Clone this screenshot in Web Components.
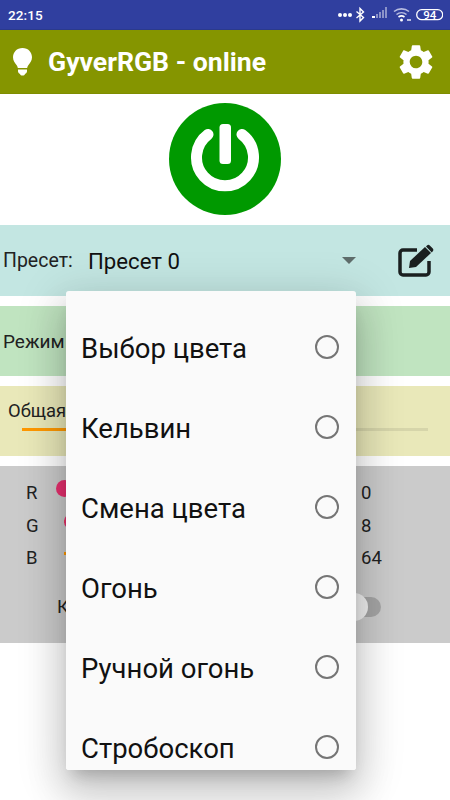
<!DOCTYPE html>
<html lang="ru"><head><meta charset="utf-8"><title>GyverRGB</title>
<style>
html,body{margin:0;padding:0;background:#fff;}
body{width:450px;height:800px;overflow:hidden;font-family:Roboto,"Noto Sans",sans-serif;color:#111;position:relative;}
</style></head><body>
<gyver-app></gyver-app>
<script>
function def(name, html){
  customElements.define(name, class extends HTMLElement{
    constructor(){super();this.attachShadow({mode:'open'}).innerHTML=html;}
  });
}
def('status-bar',`<style>
:host{display:flex;align-items:center;height:29px;padding:0 7px 0 8px;background:#303f9f;color:#fff;font:500 13.5px Roboto,sans-serif;border-bottom:1px solid #2b3a8c}
.t{flex:1;letter-spacing:.1px}
svg{display:block}
</style><span class="t">22:15</span>
<svg width="106" height="20" viewBox="0 0 106 20">
<g fill="#fff"><circle cx="3" cy="10" r="2"/><circle cx="8" cy="10" r="2"/><circle cx="13" cy="10" r="2"/></g>
<path d="M19.5 6.5l7 6-3.5 3.500V3.500l3.500 3.500-7 6" fill="none" stroke="#fff" stroke-width="1.400"/>
<g fill="#8b93c9"><rect x="39" y="9" width="2" height="4"/><rect x="42" y="7" width="2" height="6"/><rect x="45" y="5" width="2" height="8"/><rect x="48" y="2" width="2" height="11"/></g>
<rect x="35" y="11" width="3" height="2" fill="#fff"/>
<path d="M57 6.500a12 12 0 0 1 15 0M59.500 9.500a8 8 0 0 1 10 0" fill="none" stroke="#b7bce0" stroke-width="1.600"/>
<path d="M61.500 12a5 5 0 0 1 6 0" fill="none" stroke="#fff" stroke-width="1.600"/><circle cx="64.500" cy="15" r="1.500" fill="#fff"/>
<rect x="70" y="14" width="4" height="2" fill="#b7bce0"/>
<rect x="79.700" y="4.700" width="26" height="10" rx="5" fill="none" stroke="#fff" stroke-width="1.300"/>
<text x="92.700" y="14" text-anchor="middle" fill="#fff" font-family="Roboto,sans-serif" font-size="11.500" font-weight="500">94</text>
</svg>`);
def('app-bar',`<style>
:host{display:flex;align-items:center;height:64px;padding:0 13px 0 12px;background:#859500;color:#fff;box-sizing:border-box;border-bottom:1px solid #7e8d00}
h1{flex:1;margin:0 0 0 15px;font:700 26.600px Roboto,sans-serif;white-space:nowrap}
svg{display:block;fill:#fff}
</style>
<svg width="21" height="28" viewBox="0 0 21 28"><path d="M10.500 0C4.700 0 1 4.300 1 9.300c0 3.700 2.100 5.700 3.500 7.700.8 1.100 1.100 2.200 1.300 3h9.400c.2-.8.5-1.900 1.300-3 1.400-2 3.500-4 3.500-7.700C20 4.300 16.300 0 10.500 0z"/><path d="M6 21.500h9v2a3 3 0 0 1-2 2.500c-.3 1-1.200 1.500-2.500 1.500S8.300 27 8 26a3 3 0 0 1-2-2.500z"/></svg>
<h1><slot></slot></h1>
<svg width="42" height="42" viewBox="0 0 24 24"><path d="M19.140 12.940c.04-.3.060-.61.060-.94 0-.32-.02-.64-.07-.94l2.030-1.580a.49.49 0 0 0 .12-.61l-1.920-3.320a.488.488 0 0 0-.59-.22l-2.390.96c-.5-.38-1.030-.7-1.620-.94l-.36-2.540a.484.484 0 0 0-.48-.41h-3.840c-.24 0-.43.170-.47.410l-.36 2.540c-.59.240-1.130.570-1.620.940l-2.390-.96c-.22-.08-.47 0-.59.220L2.740 8.870c-.12.210-.08.470.12.610l2.030 1.580c-.05.300-.09.630-.09.940s.02.640.07.940l-2.030 1.580a.49.49 0 0 0-.12.610l1.920 3.320c.12.220.37.290.59.220l2.390-.96c.5.380 1.030.7 1.620.94l.36 2.540c.05.240.24.410.48.410h3.840c.24 0 .44-.17.470-.41l.36-2.540c.59-.24 1.130-.56 1.620-.94l2.390.96c.22.080.47 0 .59-.22l1.920-3.320c.12-.22.070-.47-.12-.61l-2.010-1.580zM12 15.600A3.610 3.610 0 0 1 8.400 12c0-1.980 1.620-3.600 3.600-3.600s3.600 1.620 3.600 3.600-1.620 3.600-3.600 3.600z"/></svg>`);
def('power-button',`<style>
:host{display:flex;justify-content:center;padding:9px 0 10px}
svg{display:block}
</style><svg width="112" height="112" viewBox="0 0 112 112">
<circle cx="56" cy="56" r="56" fill="#009900"/>
<path d="M39 31.500A28.500 28.500 0 1 0 73 31.500" fill="none" stroke="#fff" stroke-width="11" stroke-linecap="round"/>
<rect x="50.500" y="21" width="11.500" height="40" rx="3.500" fill="#fff"/></svg>`);
def('tint-band',`<style>
:host{display:flex;align-items:center;height:70px;margin-bottom:10px;box-sizing:border-box;font:19px Roboto,sans-serif;color:#222;background:var(--bg)}
:host([tall]){height:71px}
</style><slot></slot>`);
def('preset-row',`<style>
:host{display:flex;align-items:center;flex:1;padding:0 15px 0 3px}
.l{font-size:19.500px;width:85px;white-space:nowrap}
.v{flex:1;font-size:22.200px;color:#111;white-space:nowrap}
.a{width:0;height:0;border:7.500px solid transparent;border-top:7px solid #5f6d6b;border-bottom:0;margin-right:42px}
svg{display:block}
</style><span class="l"><slot name="label"></slot></span><span class="v"><slot></slot></span><span class="a"></span>
<svg width="37" height="34" viewBox="0 0 37 34"><path d="M19 6H5a3 3 0 0 0-3 3v19a3 3 0 0 0 3 3h23a3 3 0 0 0 3-3V17" fill="none" stroke="#1a1f1f" stroke-width="3.500"/><path d="M11 24l1-7L27 3l6 6-15 14z" fill="#1a1f1f"/><path d="M29 1.500a2 2 0 0 1 2.800 0l3 3a2 2 0 0 1 0 2.800L33.800 8.500 28 2.500z" fill="#1a1f1f"/></svg>`);
def('slider-line',`<style>
:host{display:block;position:relative;height:3px;background:var(--track,transparent)}
i{display:block;height:100%;width:var(--fill,0);background:#ff9800}
</style><i></i>`);
def('mode-band',`<style>
:host{display:block;flex:1;padding:0 3px;font-size:19px}
</style><slot></slot>`);
def('bright-band',`<style>
:host{display:flex;flex-direction:column;flex:1;padding:14px 22px 0 8px;font-size:18.400px;gap:7px}
slider-line{margin-left:14px;--track:#d6d5aa;--fill:44px}
</style><slot></slot><slider-line></slider-line>`);
def('rgb-row',`<style>
:host{display:grid;grid-template-columns:30px 1fr 90px;align-items:center;height:32.500px;font:18.500px Roboto,sans-serif;color:#222}
.s{position:relative;height:3px;margin-bottom:5px}
.s i{position:absolute;left:8px;top:0;height:3px;width:60px;background:#ff9800}
.s b{position:absolute;left:var(--pos,0);top:-7px;width:17px;height:17px;border-radius:50%;background:#e8306f;display:var(--thumb,block)}
.v{padding-left:1px;margin-top:4px}
.n{margin-top:4px}
</style><span class="n"><slot name="n"></slot></span><span class="s"><i></i><b></b></span><span class="v"><slot></slot></span>`);
def('rgb-panel',`<style>
:host{display:block;height:177px;box-sizing:border-box;padding:9px 0 0 26px;background:#cbcbcb;font:18.500px Roboto,sans-serif;color:#222}
.sw{display:flex;align-items:center;justify-content:flex-end;height:28px;margin-top:20px;padding-right:69px;position:relative}
.k{position:absolute;left:31px}
.t{width:40px;height:20px;border-radius:10px;background:#a5a5a5;position:relative}
.t b{position:absolute;left:-1px;top:-4px;width:28px;height:28px;border-radius:50%;background:#f1f1f1}
</style><slot></slot><div class="sw"><span class="k"><slot name="k"></slot></span><span class="t"><b></b></span></div>`);
def('menu-item',`<style>
:host{display:flex;align-items:center;justify-content:space-between;height:80px;flex:none;padding:0 17px 0 15px;font:27.500px Roboto,sans-serif;color:#111}
span{padding-top:2px}
i{display:block;width:20px;height:20px;border:2px solid #757575;border-radius:50%}
</style><span><slot></slot></span><i></i>`);
def('mode-menu',`<style>
:host{position:absolute;left:66px;top:291px;width:290px;height:479px;box-sizing:border-box;padding-top:16px;background:#fafafa;border-radius:3px;overflow:hidden;display:flex;flex-direction:column}
</style><slot></slot>`);
def('menu-shadow',`<style>
:host{position:absolute;left:66px;top:291px;width:290px;height:479px;border-radius:3px;box-shadow:0 24px 38px 3px rgba(0,0,0,.14),0 9px 46px 8px rgba(0,0,0,.12),0 11px 15px -7px rgba(0,0,0,.2)}
</style>`);
def('gyver-app',`<style>
:host{display:block;position:relative;width:450px;height:800px;background:#fff}
</style>
<status-bar></status-bar>
<app-bar>GyverRGB - online</app-bar>
<power-button></power-button>
<tint-band tall style="--bg:#c3e6e2"><preset-row><span slot="label">Пресет:</span>Пресет 0</preset-row></tint-band>
<tint-band style="--bg:#c0e4c0"><mode-band>Режим</mode-band></tint-band>
<tint-band style="--bg:#e9e8b9;align-items:stretch"><bright-band>Общая</bright-band></tint-band>
<rgb-panel>
<rgb-row style="--pos:0px"><span slot="n">R</span>0</rgb-row>
<rgb-row style="--pos:8px"><span slot="n">G</span>8</rgb-row>
<rgb-row style="--thumb:none"><span slot="n">B</span>64</rgb-row>
<span slot="k">К</span>
</rgb-panel>
<menu-shadow></menu-shadow>
<mode-menu>
<menu-item>Выбор цвета</menu-item>
<menu-item>Кельвин</menu-item>
<menu-item>Смена цвета</menu-item>
<menu-item>Огонь</menu-item>
<menu-item>Ручной огонь</menu-item>
<menu-item>Стробоскоп</menu-item>
</mode-menu>`);
</script>
</body></html>
